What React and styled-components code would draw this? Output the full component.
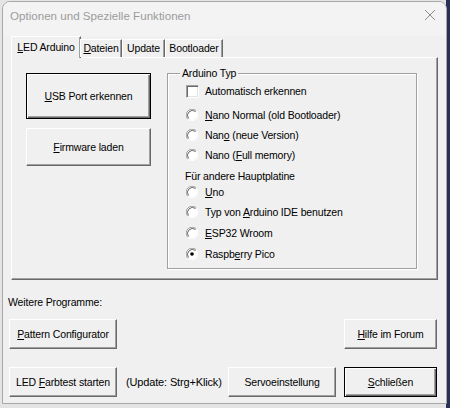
import React from "react";
import styled, { createGlobalStyle, css } from "styled-components";

const Global = createGlobalStyle`
  html, body { margin: 0; padding: 0; }
  body {
    width: 450px;
    height: 408px;
    overflow: hidden;
    background: linear-gradient(90deg, #e4e4e4 0, #e4e4e4 446px, #2a2f5a 446px);
    font-family: "Liberation Sans", Arial, sans-serif;
    font-size: 10.5px;
    letter-spacing: -0.15px;
    color: #000;
  }
`;

const Window = styled.div`
  box-sizing: border-box;
  margin: 1px 0 0 2px;
  width: 445px;
  height: 403px;
  background: #f0f0f0;
  border: 1px solid #a8a8a8;
  border-radius: 8px 8px 0 0;
  display: flex;
  flex-direction: column;
  overflow: hidden;
`;

const TitleBar = styled.div`
  height: 34px;
  flex: none;
  display: flex;
  align-items: center;
  justify-content: space-between;
  padding: 0 6px 0 7px;
  background: #f3f3f3;
`;

const Title = styled.span`
  font-family: "Liberation Sans", Arial, sans-serif;
  font-size: 11.6px;
  letter-spacing: 0;
  color: #9c9c9c;
  margin-top: -7px;
`;

const CloseIcon = styled.svg`
  width: 12px;
  height: 12px;
  margin: -8px 4px 0 0;
`;

const Content = styled.div`
  flex: none;
  padding: 0 8px 0 8px;
  display: flex;
  flex-direction: column;
`;

const TabStrip = styled.div`
  height: 21px;
  display: flex;
  align-items: flex-end;
  position: relative;
  z-index: 1;
`;

const Tab = styled.div`
  box-sizing: border-box;
  height: ${(p) => (p.$active ? "22px" : "18px")};
  width: ${(p) => p.$w}px;
  padding-top: ${(p) => (p.$active ? "4px" : "2px")};
  text-align: center;
  background: #f0f0f0;
  border-top: 1px solid #fff;
  border-left: 1px solid #fff;
  border-right: 1px solid #696969;
  box-shadow: inset -1px 0 0 #a0a0a0;
  margin-bottom: ${(p) => (p.$active ? "-1px" : "0")};
  ${(p) =>
    p.$active &&
    css`
      margin-right: -1px;
    `}
  white-space: nowrap;
`;

const Panel = styled.div`
  box-sizing: border-box;
  height: 223px;
  border-top: 1px solid #fff;
  border-left: 1px solid #fff;
  border-right: 1px solid #696969;
  border-bottom: 1px solid #696969;
  box-shadow: inset -1px -1px 0 #a0a0a0;
  padding: 15px 0 0 14px;
  display: flex;
  align-items: flex-start;
`;

const ButtonColumn = styled.div`
  width: 125px;
  display: flex;
  flex-direction: column;
  gap: 9px;
`;

const Button = styled.button`
  box-sizing: border-box;
  width: ${(p) => p.$w}px;
  height: ${(p) => p.$h}px;
  padding: 0;
  background: #f0f0f0;
  font-family: inherit;
  font-size: inherit;
  letter-spacing: inherit;
  color: #000;
  border-top: 1px solid #fff;
  border-left: 1px solid #fff;
  border-right: 1px solid #696969;
  border-bottom: 1px solid #696969;
  box-shadow: inset -1px -1px 0 #a0a0a0;
  ${(p) =>
    p.$default &&
    css`
      border: 1px solid #000;
      box-shadow: inset 1px 1px 0 #fff, inset -1px -1px 0 #696969, inset -2px -2px 0 #a0a0a0;
    `}
  white-space: nowrap;
`;

const Key = styled.span`
  text-decoration: underline;
  text-underline-offset: 1px;
`;

const Group = styled.div`
  box-sizing: border-box;
  margin: 0 0 0 16px;
  width: 250px;
  height: 196px;
  border: 1px solid #a0a0a0;
  box-shadow: inset 1px 1px 0 #fff, 1px 1px 0 #fff;
  padding: 0 0 0 18px;
  display: flex;
  flex-direction: column;
`;

const GroupTitle = styled.div`
  align-self: flex-start;
  margin: -7px 0 0 -6px;
  padding: 0 2px;
  background: #f0f0f0;
  line-height: 13px;
`;

const OptionRow = styled.label`
  display: flex;
  align-items: center;
  height: 14px;
  margin-top: ${(p) => p.$mt}px;
  gap: 4px;
  white-space: nowrap;
`;

const SubTitle = styled.div`
  height: 13px;
  line-height: 13px;
  margin-top: ${(p) => p.$mt}px;
  margin-left: -1px;
`;

const CheckBox = styled.span`
  box-sizing: border-box;
  width: 13px;
  height: 13px;
  background: #fff;
  border-top: 1px solid #a0a0a0;
  border-left: 1px solid #a0a0a0;
  border-right: 1px solid #fff;
  border-bottom: 1px solid #fff;
  box-shadow: inset 1px 1px 0 #696969, inset -1px -1px 0 #e3e3e3;
  margin-right: 2px;
`;

const RadioSvg = styled.svg`
  width: 12px;
  height: 12px;
  flex: none;
  margin-right: 3px;
`;

const Radio = ({ checked }) => (
  <RadioSvg viewBox="0 0 12 12">
    <circle cx="6" cy="6" r="5" fill="#fff" />
    <path d="M1.76 10.24 A6 6 0 0 1 10.24 1.76" fill="none" stroke="#a0a0a0" strokeWidth="1" />
    <path d="M2.5 9.5 A5 5 0 0 1 9.5 2.5" fill="none" stroke="#696969" strokeWidth="1" />
    <path d="M10.24 1.76 A6 6 0 0 1 1.76 10.24" fill="none" stroke="#fff" strokeWidth="1" />
    {checked && <circle cx="6" cy="6" r="1.8" fill="#000" />}
  </RadioSvg>
);

const SectionLabel = styled.div`
  margin: 16px 0 0 5px;
  height: 13px;
  line-height: 13px;
`;

const ButtonRow = styled.div`
  display: flex;
  align-items: center;
  padding: 0 0 0 6px;
  margin-top: ${(p) => p.$mt}px;
`;

const Spacer = styled.div`
  flex: 1;
`;

const Note = styled.span`
  margin-left: 9px;
  font-size: 11px;
  white-space: nowrap;
`;

export default function App() {
  return (
    <>
      <Global />
      <Window>
        <TitleBar>
          <Title>Optionen und Spezielle Funktionen</Title>
          <CloseIcon viewBox="0 0 12 12">
            <path d="M1 1 L11 11 M11 1 L1 11" stroke="#8c8c8c" strokeWidth="1" fill="none" />
          </CloseIcon>
        </TitleBar>
        <Content>
          <TabStrip>
            <Tab $active $w={70}>
              <Key>L</Key>ED Arduino
            </Tab>
            <Tab $w={42}>
              <Key>D</Key>ateien
            </Tab>
            <Tab $w={43}>Update</Tab>
            <Tab $w={58}>Bootloader</Tab>
          </TabStrip>
          <Panel>
            <ButtonColumn>
              <Button $default $w={125} $h={46}>
                <Key>U</Key>SB Port erkennen
              </Button>
              <Button $w={125} $h={38}>
                <Key>F</Key>irmware laden
              </Button>
            </ButtonColumn>
            <Group>
              <GroupTitle>Arduino Typ</GroupTitle>
              <OptionRow $mt={4}>
                <CheckBox />
                Automatisch erkennen
              </OptionRow>
              <OptionRow $mt={10}>
                <Radio />
                <span>
                  <Key>N</Key>ano Normal (old Bootloader)
                </span>
              </OptionRow>
              <OptionRow $mt={6}>
                <Radio />
                <span>
                  Nan<Key>o</Key> (neue Version)
                </span>
              </OptionRow>
              <OptionRow $mt={6}>
                <Radio />
                <span>
                  Nano (<Key>F</Key>ull memory)
                </span>
              </OptionRow>
              <SubTitle $mt={8}>Für andere Hauptplatine</SubTitle>
              <OptionRow $mt={2}>
                <Radio />
                <span>
                  <Key>U</Key>no
                </span>
              </OptionRow>
              <OptionRow $mt={6}>
                <Radio />
                <span>
                  Typ von <Key>A</Key>rduino IDE benutzen
                </span>
              </OptionRow>
              <OptionRow $mt={7}>
                <Radio />
                <span>
                  <Key>E</Key>SP32 Wroom
                </span>
              </OptionRow>
              <OptionRow $mt={7}>
                <Radio checked />
                <span>
                  Raspb<Key>e</Key>rry Pico
                </span>
              </OptionRow>
            </Group>
          </Panel>
        </Content>
        <SectionLabel>Weitere Programme:</SectionLabel>
        <ButtonRow $mt={10}>
          <Button $w={108} $h={30}>
            <Key>P</Key>attern Configurator
          </Button>
          <Spacer />
          <Button $w={93} $h={30} style={{ marginRight: 9 }}>
            <Key>H</Key>ilfe im Forum
          </Button>
        </ButtonRow>
        <ButtonRow $mt={18}>
          <Button $w={108} $h={30}>
            LED <Key>F</Key>arbtest starten
          </Button>
          <Note>(Update: Strg+Klick)</Note>
          <Spacer />
          <Button $w={108} $h={30}>
            Servoeinstellung
          </Button>
          <Button $default $w={93} $h={30} style={{ margin: "0 9px 0 8px" }}>
            <Key>S</Key>chließen
          </Button>
        </ButtonRow>
      </Window>
    </>
  );
}
